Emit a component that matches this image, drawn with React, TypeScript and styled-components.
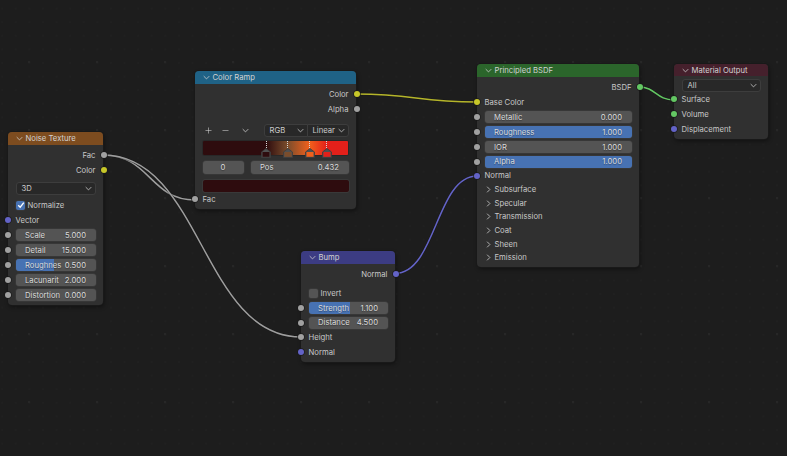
import styled, { createGlobalStyle } from "styled-components";
import { Plus, Minus } from "lucide-react";

const GlobalStyle = createGlobalStyle`
  html, body {
    margin: 0;
    background: #1d1d1d;
  }
`;

const SOCKET = {
  grey: "#a1a1a1",
  yellow: "#c7c729",
  purple: "#6363c7",
  green: "#63c763",
};

const Canvas = styled.div`
  position: relative;
  width: 787px;
  height: 456px;
  overflow: hidden;
  font-family: Inter, "Liberation Sans", sans-serif;
  font-size: 7.7px;
  color: #c8c8c8;
  background-color: #1d1d1d;
  background-image:
    radial-gradient(circle at 1px 1px, #272727 1.2px, transparent 1.6px),
    radial-gradient(circle at 1px 1px, #202020 0.7px, transparent 1px);
  background-size: 68px 68px, 13.6px 13.6px;
  background-position: 28px 61px, 1.2px 7.6px;
`;

const Wires = styled.svg`
  position: absolute;
  inset: 0;
  width: 787px;
  height: 456px;
`;

const Node = styled.div<{ $x: number; $y: number; $w: number }>`
  position: absolute;
  left: ${(p) => p.$x}px;
  top: ${(p) => p.$y}px;
  width: ${(p) => p.$w}px;
  background: #303030;
  border-radius: 4px;
  box-shadow: 0 0 0 1px #191919, 1px 2px 4px rgba(0, 0, 0, 0.45);
  padding-bottom: 2.5px;
`;

const Header = styled.div<{ $color: string; $h?: number }>`
  display: flex;
  align-items: center;
  gap: 3px;
  height: ${(p) => p.$h ?? 13}px;
  padding-left: 7.5px;
  background: ${(p) => p.$color};
  border-radius: 4px 4px 0 0;
  color: #d2d2d2;
`;

const Body = styled.div`
  padding-top: 2.5px;
`;

const Row = styled.div<{ $h?: number; $right?: boolean; $mt?: number }>`
  position: relative;
  display: flex;
  align-items: center;
  justify-content: ${(p) => (p.$right ? "flex-end" : "flex-start")};
  height: ${(p) => p.$h ?? 15}px;
  margin-top: ${(p) => p.$mt ?? 0}px;
  padding: 0 7.5px;
`;

const Socket = styled.span<{ $color: string; $right?: boolean }>`
  position: absolute;
  top: 50%;
  ${(p) => (p.$right ? "right: -3.5px;" : "left: -3.5px;")}
  width: 6px;
  height: 6px;
  margin-top: -3px;
  border-radius: 50%;
  background: ${(p) => p.$color};
  box-shadow: 0 0 0 0.7px #1a1a1a;
`;

const Track = styled.div<{ $h?: number }>`
  position: relative;
  flex: 1;
  height: ${(p) => p.$h ?? 12}px;
  background: #545454;
  border-radius: 3px;
  box-shadow: 0 0 0 0.7px #3a3a3a;
  overflow: hidden;
`;

const TrackFill = styled.div`
  position: absolute;
  left: 0;
  top: 0;
  bottom: 0;
  background: #4772b3;
`;

const TrackText = styled.div<{ $center?: boolean }>`
  position: relative;
  display: flex;
  align-items: center;
  justify-content: ${(p) => (p.$center ? "center" : "space-between")};
  height: 100%;
  padding: 0 9.5px;
  color: #dadada;
  white-space: nowrap;
  text-shadow: 0 1px 1px rgba(0, 0, 0, 0.35);
`;

const Select = styled.div<{ $w?: number; $joined?: "left" | "right" }>`
  display: flex;
  align-items: center;
  justify-content: space-between;
  box-sizing: border-box;
  flex: ${(p) => (p.$w ? "none" : "1")};
  width: ${(p) => (p.$w ? `${p.$w}px` : "auto")};
  height: 13px;
  padding: 0 3px 0 5px;
  background: #282828;
  border: 1px solid #3d3d3d;
  border-radius: ${(p) =>
    p.$joined === "left" ? "3px 0 0 3px" : p.$joined === "right" ? "0 3px 3px 0" : "3px"};
  ${(p) => (p.$joined === "right" ? "margin-left: -1px;" : "")}
  color: #cccccc;
`;

const CheckBox = styled.span<{ $on?: boolean }>`
  display: inline-flex;
  align-items: center;
  justify-content: center;
  width: 9px;
  height: 9px;
  margin: 0 2.5px 0 0.5px;
  background: ${(p) => (p.$on ? "#4772b3" : "#545454")};
  border-radius: 2px;
  box-shadow: 0 0 0 0.7px #3a3a3a;
`;

const PanelLabel = styled.span`
  margin-left: 3px;
`;

const ChevronSvg = styled.svg<{ $open?: boolean }>`
  flex: none;
  width: 7px;
  height: 7px;
  transform: rotate(${(p) => (p.$open ? 0 : -90)}deg);
`;

const Tools = styled.div`
  display: flex;
  align-items: center;
  flex: none;
  width: 61px;
  gap: 5px;
  color: #dcdcdc;
`;

const ToolSlot = styled.span<{ $ml?: number }>`
  display: flex;
  justify-content: center;
  width: 12px;
  margin-left: ${(p) => p.$ml ?? 0}px;
`;

const Ramp = styled.div`
  position: relative;
  flex: 1;
  height: 14px;
  margin: 0 0.5px;
  box-shadow: 0 0 0 0.7px #262626;
  border-radius: 1px;
`;

const RampHandle = styled.div`
  position: absolute;
  top: 0;
  width: 10px;
  margin-left: -5px;
  display: flex;
  flex-direction: column;
  align-items: center;
`;

const HandleLine = styled.span`
  width: 0;
  height: 7px;
  border-left: 1px dotted #d8d8d8;
`;

const HandleShape = styled.svg`
  display: block;
  width: 10px;
  height: 10px;
`;

const Swatch = styled.div`
  flex: 1;
  height: 12px;
  background: #2e0c0e;
  border-radius: 2px;
  box-shadow: 0 0 0 0.7px #3d3d3d;
`;

const PosRow = styled.div`
  display: flex;
  flex: 1;
  gap: 7px;
`;

const IndexField = styled(Track)`
  flex: none;
  width: 41px;
`;

function Chevron({ open = true }: { open?: boolean }) {
  return (
    <ChevronSvg $open={open} viewBox="0 0 8 8" fill="none" stroke="#d0d0d0" strokeWidth="0.9">
      <path d="M0.8 2.4 L4 5.6 L7.2 2.4" />
    </ChevronSvg>
  );
}

function Field({ label, value, fill }: { label: string; value: string; fill?: number }) {
  return (
    <Track>
      {fill !== undefined && <TrackFill style={{ width: `${fill}%` }} />}
      <TrackText>
        <span>{label}</span>
        <span>{value}</span>
      </TrackText>
    </Track>
  );
}

function FieldRow(props: {
  label: string;
  value: string;
  fill?: number;
  h?: number;
  socket?: string;
}) {
  return (
    <Row $h={props.h}>
      <Socket $color={props.socket ?? SOCKET.grey} />
      <Field label={props.label} value={props.value} fill={props.fill} />
    </Row>
  );
}

function Output({ label, color }: { label: string; color: string }) {
  return (
    <Row $right>
      {label}
      <Socket $color={color} $right />
    </Row>
  );
}

function Input({ label, color, h }: { label: string; color: string; h?: number }) {
  return (
    <Row $h={h}>
      <Socket $color={color} />
      {label}
    </Row>
  );
}

function Panel({ label }: { label: string }) {
  return (
    <Row $h={13.7}>
      <Chevron open={false} />
      <PanelLabel>{label}</PanelLabel>
    </Row>
  );
}

function Wire({ d, color }: { d: string; color: string }) {
  return (
    <>
      <path d={d} fill="none" stroke="#161616" strokeWidth="2.6" strokeOpacity="0.5" />
      <path d={d} fill="none" stroke={color} strokeWidth="1.5" />
    </>
  );
}

const rampStops = [
  { at: 43.7, color: "#2e0c0e" },
  { at: 58.3, color: "#7a4d2c" },
  { at: 73.6, color: "#f2601c" },
  { at: 85.4, color: "#e3201a" },
];

const rampGradient = `linear-gradient(to right, ${rampStops
  .map((s) => `${s.color} ${s.at}%`)
  .join(", ")})`;

export default function App() {
  return (
    <>
      <GlobalStyle />
      <Canvas>
        <Wires viewBox="0 0 787 456">
          <Wire d="M103 155 C150 155 150 200 195 200" color="#9e9e9e" />
          <Wire d="M103 155 C202 155 202 337 301 337" color="#9e9e9e" />
          <Wire d="M356 94 C416 94 416 102 477 102" color="#b5b52a" />
          <Wire d="M395 273.5 C436 273.5 436 176 477 176" color="#6363c7" />
          <Wire d="M639 87 C656 87 656 100 674 100" color="#63c763" />
        </Wires>

        <Node $x={8} $y={132} $w={95}>
          <Header $color="#7d4c1f">
            <Chevron />
            Noise Texture
          </Header>
          <Body>
            <Output label="Fac" color={SOCKET.grey} />
            <Output label="Color" color={SOCKET.yellow} />
            <Row $mt={3}>
              <Select>
                3D
                <Chevron />
              </Select>
            </Row>
            <Row $mt={2}>
              <CheckBox $on>
                <svg width="8" height="8" viewBox="0 0 8 8" fill="none" stroke="#fff" strokeWidth="1.3">
                  <path d="M1.2 4.2 L3.2 6.2 L6.8 1.6" />
                </svg>
              </CheckBox>
              Normalize
            </Row>
            <Input label="Vector" color={SOCKET.purple} />
            <FieldRow label="Scale" value="5.000" />
            <FieldRow label="Detail" value="15.000" />
            <FieldRow label="Roughnes" value="0.500" fill={48} />
            <FieldRow label="Lacunarit" value="2.000" />
            <FieldRow label="Distortion" value="0.000" />
          </Body>
        </Node>

        <Node $x={195} $y={71} $w={161}>
          <Header $color="#1f6286">
            <Chevron />
            Color Ramp
          </Header>
          <Body>
            <Output label="Color" color={SOCKET.yellow} />
            <Output label="Alpha" color={SOCKET.grey} />
            <Row $h={14} $mt={7}>
              <Tools>
                <ToolSlot>
                  <Plus size={9} strokeWidth={1.4} />
                </ToolSlot>
                <ToolSlot>
                  <Minus size={9} strokeWidth={1.4} />
                </ToolSlot>
                <ToolSlot $ml={3}>
                  <Chevron />
                </ToolSlot>
              </Tools>
              <Select $w={44} $joined="left">
                RGB
                <Chevron />
              </Select>
              <Select $joined="right">
                Linear
                <Chevron />
              </Select>
            </Row>
            <Row $h={14} $mt={3}>
              <Ramp style={{ background: rampGradient }}>
                {rampStops.map((s) => (
                  <RampHandle key={s.at} style={{ left: `${s.at}%` }}>
                    <HandleLine />
                    <HandleShape viewBox="0 0 10 10">
                      <path d="M5 0.5 L9.5 4 L9.5 9.5 L0.5 9.5 L0.5 4 Z" fill="#505050" stroke="#3c3c3c" strokeWidth="0.8" />
                      <rect x="1.5" y="4" width="7" height="4.8" fill={s.color} />
                    </HandleShape>
                  </RampHandle>
                ))}
              </Ramp>
            </Row>
            <Row $h={13} $mt={6}>
              <PosRow>
                <IndexField $h={13}>
                  <TrackText $center>0</TrackText>
                </IndexField>
                <Track $h={13}>
                  <TrackText>
                    <span>Pos</span>
                    <span>0.432</span>
                  </TrackText>
                </Track>
              </PosRow>
            </Row>
            <Row $h={12} $mt={6}>
              <Swatch />
            </Row>
            <Input label="Fac" color={SOCKET.grey} />
          </Body>
        </Node>

        <Node $x={301} $y={251} $w={94}>
          <Header $color="#3c3c83">
            <Chevron />
            Bump
          </Header>
          <Body>
            <Output label="Normal" color={SOCKET.purple} />
            <Row $mt={4}>
              <CheckBox />
              Invert
            </Row>
            <FieldRow label="Strength" value="1.100" fill={53} />
            <FieldRow label="Distance" value="4.500" h={14} />
            <Input label="Height" color={SOCKET.grey} />
            <Input label="Normal" color={SOCKET.purple} />
          </Body>
        </Node>

        <Node $x={477} $y={64} $w={162}>
          <Header $color="#2b652b">
            <Chevron />
            Principled BSDF
          </Header>
          <Body>
            <Output label="BSDF" color={SOCKET.green} />
            <Input label="Base Color" color={SOCKET.yellow} />
            <FieldRow label="Metallic" value="0.000" />
            <FieldRow label="Roughness" value="1.000" fill={100} />
            <FieldRow label="IOR" value="1.000" />
            <FieldRow label="Alpha" value="1.000" fill={100} h={14} />
            <Input label="Normal" color={SOCKET.purple} h={14} />
            <Panel label="Subsurface" />
            <Panel label="Specular" />
            <Panel label="Transmission" />
            <Panel label="Coat" />
            <Panel label="Sheen" />
            <Panel label="Emission" />
          </Body>
        </Node>

        <Node $x={674} $y={64} $w={94}>
          <Header $color="#45202c" $h={12}>
            <Chevron />
            Material Output
          </Header>
          <Body>
            <Row $h={13}>
              <Select>
                All
                <Chevron />
              </Select>
            </Row>
            <Input label="Surface" color={SOCKET.green} />
            <Input label="Volume" color={SOCKET.green} />
            <Input label="Displacement" color={SOCKET.purple} />
          </Body>
        </Node>
      </Canvas>
    </>
  );
}
